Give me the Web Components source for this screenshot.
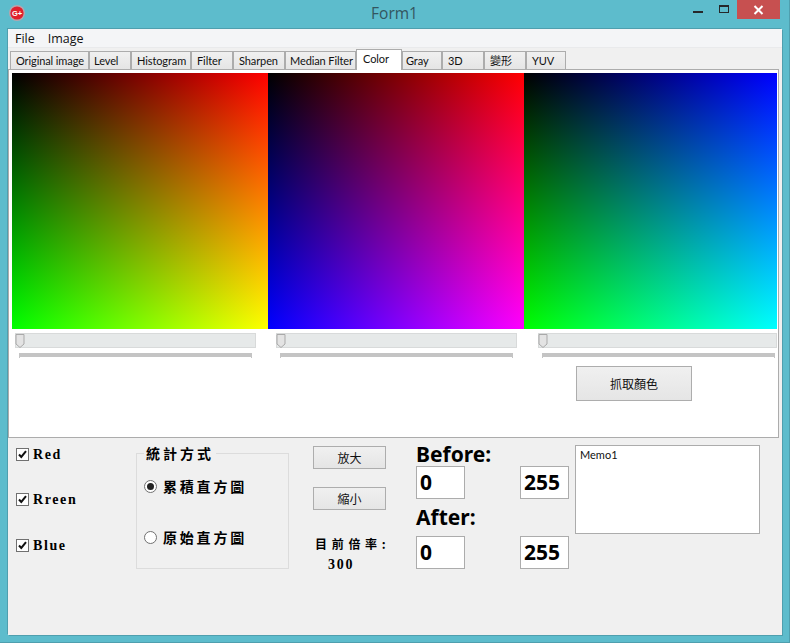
<!DOCTYPE html>
<html>
<head>
<meta charset="utf-8">
<title>Form1</title>
<style>
  html, body { margin: 0; padding: 0; background: #5dbccc; }
  body { font-family: "Open Sans", "Noto Sans CJK TC", sans-serif; }
</style>
</head>
<body>

<app-window caption="Form1">
  <win-menu items="File,Image"></win-menu>
  <win-tabs active="Color"></win-tabs>
  <tab-page>
    <color-panel w="256" x="#f00" y="#0f0"></color-panel>
    <color-panel w="256" x="#f00" y="#00f"></color-panel>
    <color-panel w="253" x="#00f" y="#0f0"></color-panel>
    <track-bar slot="tracks" w="241" lead="3" mark="233"></track-bar>
    <track-bar slot="tracks" w="241" lead="20" mark="233"></track-bar>
    <track-bar slot="tracks" w="239" lead="21" mark="233"></track-bar>
    <win-button slot="action" w="116" h="35">抓取顏色</win-button>
  </tab-page>
  <control-panel>
    <div slot="checks">
      <check-box>Red</check-box>
      <check-box>Rreen</check-box>
      <check-box>Blue</check-box>
    </div>
    <group-box slot="group" caption="統計方式">
      <radio-box checked>累積直方圖</radio-box>
      <radio-box>原始直方圖</radio-box>
    </group-box>
    <zoom-box slot="zoom" rate="300"></zoom-box>
    <range-box slot="range"></range-box>
    <memo-box slot="memo">Memo1</memo-box>
  </control-panel>
</app-window>

<script>
const UI = '"Open Sans", "Noto Sans CJK TC", sans-serif'
const SMALL = 'Lato, "Noto Sans CJK TC", sans-serif'
const SERIF = '"Liberation Serif", "Noto Sans CJK TC", serif'

class AppWindow extends HTMLElement {
  constructor () {
    super()
    this.shadow = this.attachShadow({ mode: 'open' })
  }
  connectedCallback () {
    this.shadow.innerHTML = /*html*/`
    <style>
      :host {
        display: flex;
        flex-direction: column;
        width: 790px;
        height: 643px;
        box-sizing: border-box;
        background: #5dbccc;
        border-right: 1px solid #4f9fae;
        border-bottom: 1px solid #4f9fae;
        overflow: hidden;
      }
      header {
        display: grid;
        grid-template-columns: 1fr auto 1fr;
        align-items: start;
        height: 29px;
        flex: none;
      }
      .logo { margin: 4px 0 0 8px; display: block; }
      h1 {
        margin: 4px 0 0 0;
        font: 400 15.5px/18px ${UI};
        color: #33555f;
      }
      .controls {
        display: flex;
        justify-content: flex-end;
        align-items: flex-start;
        padding-right: 9px;
      }
      .min { width: 10px; height: 2px; background: #26282a; margin: 11px 16px 0 0; }
      .max { width: 8px; height: 5px; border: 1px solid #26282a; border-top-width: 2px; margin: 5px 8px 0 0; }
      .close {
        display: flex;
        align-items: center;
        justify-content: center;
        width: 43px;
        height: 19px;
        background: #c75050;
      }
      main {
        display: flex;
        flex-direction: column;
        flex: none;
        width: 774px;
        height: 606px;
        margin-left: 8px;
        background: #f0f0f0;
        box-shadow: -1px -1px 0 #4f9fae, 1px 1px 0 #4f9fae;
      }
    </style>
    <header>
      <svg class="logo" width="18" height="18" viewBox="0 0 18 18">
        <circle cx="9" cy="9" r="8" fill="#b9a4ac"/>
        <circle cx="9" cy="9" r="6.6" fill="#e01f2c"/>
        <text x="3.9" y="11.6" font-family="Liberation Sans" font-weight="700" font-size="7.5" fill="#fff">G+</text>
      </svg>
      <h1>${this.getAttribute('caption')}</h1>
      <div class="controls">
        <div class="min"></div>
        <div class="max"></div>
        <div class="close">
          <svg width="11" height="10" viewBox="0 0 11 10"><path d="M1.5 1 9.5 9M9.5 1 1.5 9" stroke="#fff" stroke-width="2"/></svg>
        </div>
      </div>
    </header>
    <main><slot></slot></main>
    `
  }
}

class WinMenu extends HTMLElement {
  constructor () {
    super()
    this.shadow = this.attachShadow({ mode: 'open' })
  }
  connectedCallback () {
    const items = this.getAttribute('items').split(',')
    this.shadow.innerHTML = /*html*/`
    <style>
      :host {
        display: flex;
        gap: 13px;
        height: 18px;
        padding-left: 7px;
        background: #f4f5f7;
        border-bottom: 1px solid #e9eaec;
        font: 400 12.5px/19px ${UI};
        color: #111;
      }
    </style>
    ${items.map(i => `<span>${i}</span>`).join('')}
    `
  }
}

class WinTabs extends HTMLElement {
  constructor () {
    super()
    this.shadow = this.attachShadow({ mode: 'open' })
  }
  connectedCallback () {
    const active = this.getAttribute('active')
    const tabs = [
      ['Original image', 79, 5], ['Level', 42, 4], ['Histogram', 60, 5], ['Filter', 42, 5],
      ['Sharpen', 52, 5], ['Median Filter', 71, 4], ['Color', 46, 6], ['Gray', 40, 3],
      ['3D', 42, 5], ['變形', 42, 5], ['YUV', 40, 5]
    ]
    this.shadow.innerHTML = /*html*/`
    <style>
      :host {
        display: flex;
        align-items: flex-end;
        height: 21px;
        padding-left: 2px;
        font: 400 11px/18px ${SMALL};
        letter-spacing: -0.1px;
        color: #111;
        position: relative;
        z-index: 1;
      }
      div {
        box-sizing: border-box;
        height: 18px;
        border: 1px solid #acacac;
        border-bottom: 0;
        background: linear-gradient(#f0f0f0, #e5e5e5);
        white-space: nowrap;
      }
      div.on {
        height: 21px;
        margin-bottom: -1px;
        background: #fff;
        line-height: 18px;
      }
    </style>
    ${tabs.map(([t, w, p]) => `<div class="${t === active ? 'on' : ''}" style="width:${w}px;padding-left:${p}px">${t}</div>`).join('')}
    `
  }
}

class TabPage extends HTMLElement {
  constructor () {
    super()
    this.shadow = this.attachShadow({ mode: 'open' })
  }
  connectedCallback () {
    this.shadow.innerHTML = /*html*/`
    <style>
      :host {
        display: block;
        box-sizing: border-box;
        width: 771px;
        height: 369px;
        flex: none;
        padding: 3px 0 0 3px;
        background: #fff;
        border: 1px solid #acacac;
      }
      .panels { display: flex; height: 256px; }
      .tracks { display: flex; margin-top: 4px; }
      .action { display: flex; justify-content: flex-end; margin: 8px 86px 0 0; }
    </style>
    <div class="panels"><slot></slot></div>
    <div class="tracks"><slot name="tracks"></slot></div>
    <div class="action"><slot name="action"></slot></div>
    `
  }
}

class ColorPanel extends HTMLElement {
  constructor () {
    super()
    this.shadow = this.attachShadow({ mode: 'open' })
  }
  connectedCallback () {
    const x = this.getAttribute('x')
    const y = this.getAttribute('y')
    this.shadow.innerHTML = /*html*/`
    <style>
      :host {
        display: block;
        width: ${this.getAttribute('w')}px;
        height: 256px;
        background-color: #000;
        background-image:
          linear-gradient(to right, #000, ${x}),
          linear-gradient(to bottom, #000, ${y});
        background-blend-mode: screen;
      }
    </style>
    `
  }
}

class TrackBar extends HTMLElement {
  constructor () {
    super()
    this.shadow = this.attachShadow({ mode: 'open' })
  }
  connectedCallback () {
    const w = this.getAttribute('w')
    const mark = this.getAttribute('mark')
    this.shadow.innerHTML = /*html*/`
    <style>
      :host {
        display: block;
        width: ${w}px;
        margin-left: ${this.getAttribute('lead')}px;
        flex: none;
      }
      .bar {
        box-sizing: border-box;
        height: 15px;
        background: #e6e9e9;
        border: 1px solid #d8dada;
      }
      svg { display: block; margin-top: -1px; margin-left: -1px; }
      .mark {
        width: ${mark}px;
        height: 4px;
        margin: 5px 0 0 4px;
        background: #c4c4c4;
      }
      .feet { display: flex; justify-content: space-between; width: ${mark}px; margin-left: 4px; }
      .feet i { width: 1px; height: 1px; background: #c4c4c4; }
    </style>
    <div class="bar">
      <svg width="10" height="16" viewBox="0 0 10 16">
        <path d="M1 1.5H9V11L5 14.5 1 11Z" fill="#e3e3e3" stroke="#a9a9a9"/>
      </svg>
    </div>
    <div class="mark"></div>
    <div class="feet"><i></i><i></i></div>
    `
  }
}

class WinButton extends HTMLElement {
  constructor () {
    super()
    this.shadow = this.attachShadow({ mode: 'open' })
  }
  connectedCallback () {
    this.shadow.innerHTML = /*html*/`
    <style>
      :host {
        display: flex;
        align-items: center;
        justify-content: center;
        box-sizing: border-box;
        width: ${this.getAttribute('w')}px;
        height: ${this.getAttribute('h')}px;
        flex: none;
        border: 1px solid #adadad;
        background: linear-gradient(#f0f0f0, #e5e5e5);
        font: 400 12px/14px "Noto Sans CJK TC", sans-serif;
        color: #111;
      }
    </style>
    <slot></slot>
    `
  }
}

class ControlPanel extends HTMLElement {
  constructor () {
    super()
    this.shadow = this.attachShadow({ mode: 'open' })
  }
  connectedCallback () {
    this.shadow.innerHTML = /*html*/`
    <style>
      :host {
        display: grid;
        grid-template-columns: 120px 153px 74px 153px 185px;
        padding-left: 8px;
        flex: 1;
      }
      .checks { padding-top: 10px; }
      .group { padding-top: 15px; }
      .zoom { margin-left: 24px; padding-top: 8px; }
      .range { margin-left: 53px; padding-top: 5px; }
      .memo { margin-left: 59px; padding-top: 7px; }
    </style>
    <div class="checks"><slot name="checks"></slot></div>
    <div class="group"><slot name="group"></slot></div>
    <div class="zoom"><slot name="zoom"></slot></div>
    <div class="range"><slot name="range"></slot></div>
    <div class="memo"><slot name="memo"></slot></div>
    `
  }
}

class CheckBox extends HTMLElement {
  constructor () {
    super()
    this.shadow = this.attachShadow({ mode: 'open' })
  }
  connectedCallback () {
    this.shadow.innerHTML = /*html*/`
    <style>
      :host {
        display: flex;
        align-items: center;
        gap: 4px;
        height: 13px;
        margin-bottom: 32px;
        font: 700 14px/13px ${SERIF};
        letter-spacing: 1.6px;
        color: #000;
      }
      :host(:nth-child(2)) { margin-bottom: 33px; }
      svg { flex: none; }
    </style>
    <svg width="13" height="13" viewBox="0 0 13 13">
      <rect x=".5" y=".5" width="12" height="12" fill="#fff" stroke="#707070"/>
      <path d="M3 6.5 5.3 9 10 3.2" fill="none" stroke="#111" stroke-width="2"/>
    </svg>
    <span><slot></slot></span>
    `
  }
}

class RadioBox extends HTMLElement {
  constructor () {
    super()
    this.shadow = this.attachShadow({ mode: 'open' })
  }
  connectedCallback () {
    const dot = this.hasAttribute('checked') ? '<circle cx="6.5" cy="6.5" r="3.5" fill="#222"/>' : ''
    this.shadow.innerHTML = /*html*/`
    <style>
      :host {
        display: flex;
        align-items: center;
        gap: 6px;
        height: 16px;
        margin-bottom: 35px;
        font: 700 14px/16px "Noto Sans CJK TC", sans-serif;
        letter-spacing: 2.8px;
        color: #000;
        white-space: nowrap;
      }
      svg { flex: none; }
    </style>
    <svg width="13" height="13" viewBox="0 0 13 13">
      <circle cx="6.5" cy="6.5" r="6" fill="#fff" stroke="#707070"/>
      ${dot}
    </svg>
    <span><slot></slot></span>
    `
  }
}

class GroupBox extends HTMLElement {
  constructor () {
    super()
    this.shadow = this.attachShadow({ mode: 'open' })
  }
  connectedCallback () {
    this.shadow.innerHTML = /*html*/`
    <style>
      :host {
        display: block;
        box-sizing: border-box;
        width: 153px;
        height: 116px;
        padding: 24px 0 0 7px;
        border: 1px solid #dcdcdc;
        position: relative;
      }
      .caption {
        position: absolute;
        left: 7px;
        top: -9px;
        padding: 0 2px;
        background: #f0f0f0;
        font: 700 14px/16px "Noto Sans CJK TC", sans-serif;
        letter-spacing: 3px;
        color: #000;
        white-space: nowrap;
      }
    </style>
    <div class="caption">${this.getAttribute('caption')}</div>
    <slot></slot>
    `
  }
}

class ZoomBox extends HTMLElement {
  constructor () {
    super()
    this.shadow = this.attachShadow({ mode: 'open' })
  }
  connectedCallback () {
    this.shadow.innerHTML = /*html*/`
    <style>
      :host {
        display: flex;
        flex-direction: column;
        gap: 18px;
        width: 74px;
      }
      .rate {
        margin: 8px 0 0 2px;
        font: 700 12px/16px "Noto Sans CJK TC", sans-serif;
        letter-spacing: 4.7px;
        color: #000;
        white-space: nowrap;
      }
      .val {
        margin: -13px 0 0 15px;
        font: 700 14px/16px ${SERIF};
        letter-spacing: 1.8px;
        color: #000;
      }
    </style>
    <win-button w="73" h="23">放大</win-button>
    <win-button w="73" h="23">縮小</win-button>
    <div class="rate">目前倍率:</div>
    <div class="val">${this.getAttribute('rate')}</div>
    `
  }
}

class RangeBox extends HTMLElement {
  constructor () {
    super()
    this.shadow = this.attachShadow({ mode: 'open' })
  }
  connectedCallback () {
    this.shadow.innerHTML = /*html*/`
    <style>
      :host {
        display: block;
        width: 153px;
        font: 700 21px/23px "Noto Sans", sans-serif;
        color: #000;
      }
      .title { height: 23px; }
      .title.after { margin-top: 7px; height: 30px; }
      .row { display: flex; justify-content: space-between; }
    </style>
    <div class="title">Before:</div>
    <div class="row"><num-field>0</num-field><num-field>255</num-field></div>
    <div class="title after">After:</div>
    <div class="row"><num-field>0</num-field><num-field>255</num-field></div>
    `
  }
}

class NumField extends HTMLElement {
  constructor () {
    super()
    this.shadow = this.attachShadow({ mode: 'open' })
  }
  connectedCallback () {
    this.shadow.innerHTML = /*html*/`
    <style>
      :host {
        display: block;
        box-sizing: border-box;
        width: 49px;
        height: 33px;
        padding-left: 3px;
        background: #fff;
        border: 1px solid #acacac;
        font: 700 21px/31px "Noto Sans", sans-serif;
      }
    </style>
    <slot></slot>
    `
  }
}

class MemoBox extends HTMLElement {
  constructor () {
    super()
    this.shadow = this.attachShadow({ mode: 'open' })
  }
  connectedCallback () {
    this.shadow.innerHTML = /*html*/`
    <style>
      :host {
        display: block;
        box-sizing: border-box;
        width: 185px;
        height: 89px;
        padding: 1px 4px;
        background: #fff;
        border: 1px solid #acacac;
        font: 400 11px/15px ${SMALL};
        color: #111;
      }
    </style>
    <slot></slot>
    `
  }
}

customElements.define('app-window', AppWindow)
customElements.define('win-menu', WinMenu)
customElements.define('win-tabs', WinTabs)
customElements.define('tab-page', TabPage)
customElements.define('color-panel', ColorPanel)
customElements.define('track-bar', TrackBar)
customElements.define('win-button', WinButton)
customElements.define('control-panel', ControlPanel)
customElements.define('check-box', CheckBox)
customElements.define('radio-box', RadioBox)
customElements.define('group-box', GroupBox)
customElements.define('zoom-box', ZoomBox)
customElements.define('range-box', RangeBox)
customElements.define('num-field', NumField)
customElements.define('memo-box', MemoBox)
</script>
</body>
</html>
